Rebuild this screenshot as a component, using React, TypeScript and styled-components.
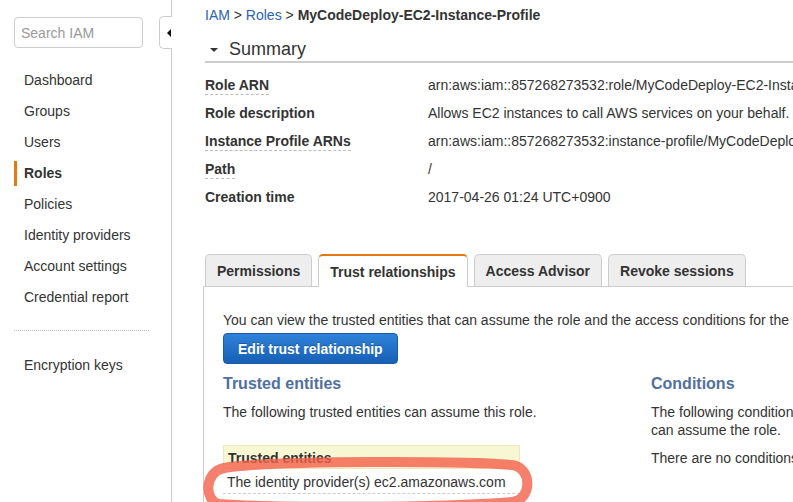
import React from "react";
import styled, { createGlobalStyle } from "styled-components";

const Global = createGlobalStyle`
  html, body { margin: 0; padding: 0; overflow: hidden; background: #fff; }
  body {
    font-family: "Liberation Sans", Helvetica, Arial, sans-serif;
    font-size: 14px;
    color: #333;
  }
  * { box-sizing: border-box; }
`;

const Page = styled.div`
  display: flex;
  width: 793px;
  height: 502px;
  overflow: hidden;
`;

const Sidebar = styled.aside`
  position: relative;
  flex: 0 0 172px;
  border-right: 1px solid #ccc;
  padding: 17px 0 0 14px;
`;

const Search = styled.input`
  display: block;
  width: 129px;
  height: 31px;
  border: 1px solid #ccc;
  border-radius: 4px;
  padding: 0 6px;
  font-family: inherit;
  font-size: 14px;
  color: #333;
  outline: none;
  &::placeholder { color: #999; }
`;

const Collapse = styled.div`
  position: absolute;
  top: 16px;
  right: -1px;
  width: 13px;
  height: 33px;
  border: 1px solid #ccc;
  border-right: none;
  border-radius: 5px 0 0 5px;
  background: #fff;
  display: flex;
  align-items: center;
  justify-content: flex-end;
  padding-right: 1px;
  &::after {
    content: "";
    width: 0;
    height: 0;
    border-top: 4px solid transparent;
    border-bottom: 4px solid transparent;
    border-right: 4px solid #111;
  }
`;

const Nav = styled.ul<{ $top?: number }>`
  list-style: none;
  margin: ${(p) => p.$top ?? 17}px 0 0;
  padding: 0;
`;

const NavItem = styled.li<{ $active?: boolean }>`
  position: relative;
  height: 31px;
  line-height: 31px;
  padding-left: 10px;
  color: #333;
  font-weight: ${(p) => (p.$active ? 700 : 400)};
  white-space: nowrap;
  &::before {
    content: "";
    display: ${(p) => (p.$active ? "block" : "none")};
    position: absolute;
    left: 0;
    top: 3px;
    width: 3px;
    height: 25px;
    background: #e47911;
  }
`;

const Separator = styled.div`
  width: 135px;
  border-top: 1px dotted #bbb;
  margin: 17px 0 19px;
`;

const Main = styled.main`
  flex: 1 1 auto;
  min-width: 0;
  padding: 5px 0 0 33px;
  overflow: hidden;
`;

const Crumbs = styled.div`
  line-height: 20px;
  white-space: nowrap;
  color: #333;
`;

const Crumb = styled.a`
  color: #2a65ae;
  text-decoration: none;
`;

const Current = styled.span`
  font-weight: 700;
`;

const SummaryHead = styled.div`
  display: flex;
  align-items: center;
  gap: 11px;
  margin-top: 14px;
  height: 24px;
  font-size: 18px;
  line-height: 22px;
  color: #333;
  border-bottom: 2px solid #ccc;
  padding-left: 5px;
  padding-bottom: 2px;
  &::before {
    content: "";
    width: 0;
    height: 0;
    border-left: 4px solid transparent;
    border-right: 4px solid transparent;
    border-top: 4px solid #333;
    margin-top: 2px;
  }
`;

const Rows = styled.div`
  margin-top: 8px;
`;

const Row = styled.div`
  display: flex;
  height: 28px;
  align-items: center;
  white-space: nowrap;
`;

const Label = styled.div`
  flex: 0 0 223px;
  font-weight: 700;
  color: #333;
`;

const Dotted = styled.span`
  border-bottom: 1px dashed #bbb;
  padding-bottom: 1px;
`;

const Value = styled.div`
  color: #333;
`;

const TabsArea = styled.div`
  margin: 43px 0 0 -2px;
  width: 900px;
`;

const TabStrip = styled.div`
  display: flex;
  gap: 6px;
  padding-left: 2px;
  border-bottom: 1px solid #ccc;
  height: 33px;
`;

const Tab = styled.div<{ $active?: boolean }>`
  height: ${(p) => (p.$active ? "33px" : "32px")};
  padding: 0 11px;
  display: flex;
  align-items: center;
  font-weight: 700;
  color: #333;
  white-space: nowrap;
  background: ${(p) => (p.$active ? "#fff" : "#eee")};
  border: 1px solid #ccc;
  border-top: ${(p) => (p.$active ? "2px solid #e47911" : "1px solid #ccc")};
  border-bottom: none;
  border-radius: 5px 5px 0 0;
`;

const Panel = styled.div`
  border-left: 1px solid #ccc;
  padding: 24px 0 0 19px;
  height: 300px;
`;

const Intro = styled.p`
  margin: 0;
  line-height: 18px;
  white-space: nowrap;
`;

const PrimaryButton = styled.button`
  display: block;
  margin-top: 4px;
  height: 31px;
  padding: 0 14px;
  border: 1px solid #1a5aa8;
  border-radius: 4px;
  background: linear-gradient(#2f82d9, #1760b6);
  color: #fff;
  font-family: inherit;
  font-size: 14px;
  font-weight: 700;
  text-shadow: 0 -1px 0 rgba(0, 0, 0, 0.25);
`;

const Columns = styled.div`
  display: flex;
  margin-top: 10px;
`;

const Column = styled.div<{ $w: number }>`
  flex: 0 0 ${(p) => p.$w}px;
`;

const SectionTitle = styled.h3`
  margin: 0;
  font-size: 16px;
  line-height: 20px;
  font-weight: 700;
  color: #4f6fa0;
`;

const Text = styled.p<{ $gap?: number }>`
  margin: ${(p) => p.$gap ?? 9}px 0 0;
  line-height: 18px;
`;

const TableWrap = styled.div`
  position: relative;
  width: 297px;
  margin-top: 24px;
`;

const TableHead = styled.div`
  height: 24px;
  line-height: 24px;
  padding-left: 4px;
  background: #f8f7d4;
  border: 1px solid #ebe9bd;
  font-weight: 700;
  color: #333;
`;

const TableCell = styled.div`
  height: 25px;
  line-height: 26px;
  padding-left: 4px;
  border-bottom: 1px dashed #ccc;
  white-space: nowrap;
`;

const Annotation = styled.svg`
  position: absolute;
  left: -20px;
  top: 10px;
  width: 340px;
  height: 60px;
  overflow: visible;
  pointer-events: none;
`;

const navItems = [
  "Dashboard",
  "Groups",
  "Users",
  "Roles",
  "Policies",
  "Identity providers",
  "Account settings",
  "Credential report",
];

const summary: { label: string; value: string; dotted?: boolean }[] = [
  { label: "Role ARN", value: "arn:aws:iam::857268273532:role/MyCodeDeploy-EC2-Instance-Profile", dotted: true },
  { label: "Role description", value: "Allows EC2 instances to call AWS services on your behalf." },
  { label: "Instance Profile ARNs", value: "arn:aws:iam::857268273532:instance-profile/MyCodeDeploy-EC2-Instance-Profile", dotted: true },
  { label: "Path", value: "/", dotted: true },
  { label: "Creation time", value: "2017-04-26 01:24 UTC+0900" },
];

const tabs = ["Permissions", "Trust relationships", "Access Advisor", "Revoke sessions"];

export default function App() {
  return (
    <Page>
      <Global />
      <Sidebar>
        <Search placeholder="Search IAM" />
        <Collapse />
        <Nav>
          {navItems.map((n) => (
            <NavItem key={n} $active={n === "Roles"}>
              {n}
            </NavItem>
          ))}
        </Nav>
        <Separator />
        <Nav $top={0}>
          <NavItem>Encryption keys</NavItem>
        </Nav>
      </Sidebar>
      <Main>
        <Crumbs>
          <Crumb>IAM</Crumb> &gt; <Crumb>Roles</Crumb> &gt;{" "}
          <Current>MyCodeDeploy-EC2-Instance-Profile</Current>
        </Crumbs>
        <SummaryHead>Summary</SummaryHead>
        <Rows>
          {summary.map((r) => (
            <Row key={r.label}>
              <Label>{r.dotted ? <Dotted>{r.label}</Dotted> : r.label}</Label>
              <Value>{r.value}</Value>
            </Row>
          ))}
        </Rows>
        <TabsArea>
          <TabStrip>
            {tabs.map((t) => (
              <Tab key={t} $active={t === "Trust relationships"}>
                {t}
              </Tab>
            ))}
          </TabStrip>
          <Panel>
            <Intro>
              You can view the trusted entities that can assume the role and the access conditions for the role.
            </Intro>
            <PrimaryButton>Edit trust relationship</PrimaryButton>
            <Columns>
              <Column $w={428}>
                <SectionTitle>Trusted entities</SectionTitle>
                <Text>The following trusted entities can assume this role.</Text>
                <TableWrap>
                  <TableHead>Trusted entities</TableHead>
                  <TableCell>The identity provider(s) ec2.amazonaws.com</TableCell>
                  <Annotation viewBox="203 454 340 60">
                    <path
                      d="M 224 467 C 270 459, 470 460, 512 464 C 533 467, 532 499, 512 501 C 440 507, 270 507, 219 503 C 204 500, 204 471, 224 467 Z"
                      fill="none"
                      stroke="rgba(243, 96, 74, 0.8)"
                      strokeWidth="10"
                    />
                  </Annotation>
                </TableWrap>
              </Column>
              <Column $w={400}>
                <SectionTitle>Conditions</SectionTitle>
                <Text>The following conditions define how and when trusted entities can assume the role.</Text>
                <Text $gap={10}>There are no conditions associated with this role.</Text>
              </Column>
            </Columns>
          </Panel>
        </TabsArea>
      </Main>
    </Page>
  );
}
